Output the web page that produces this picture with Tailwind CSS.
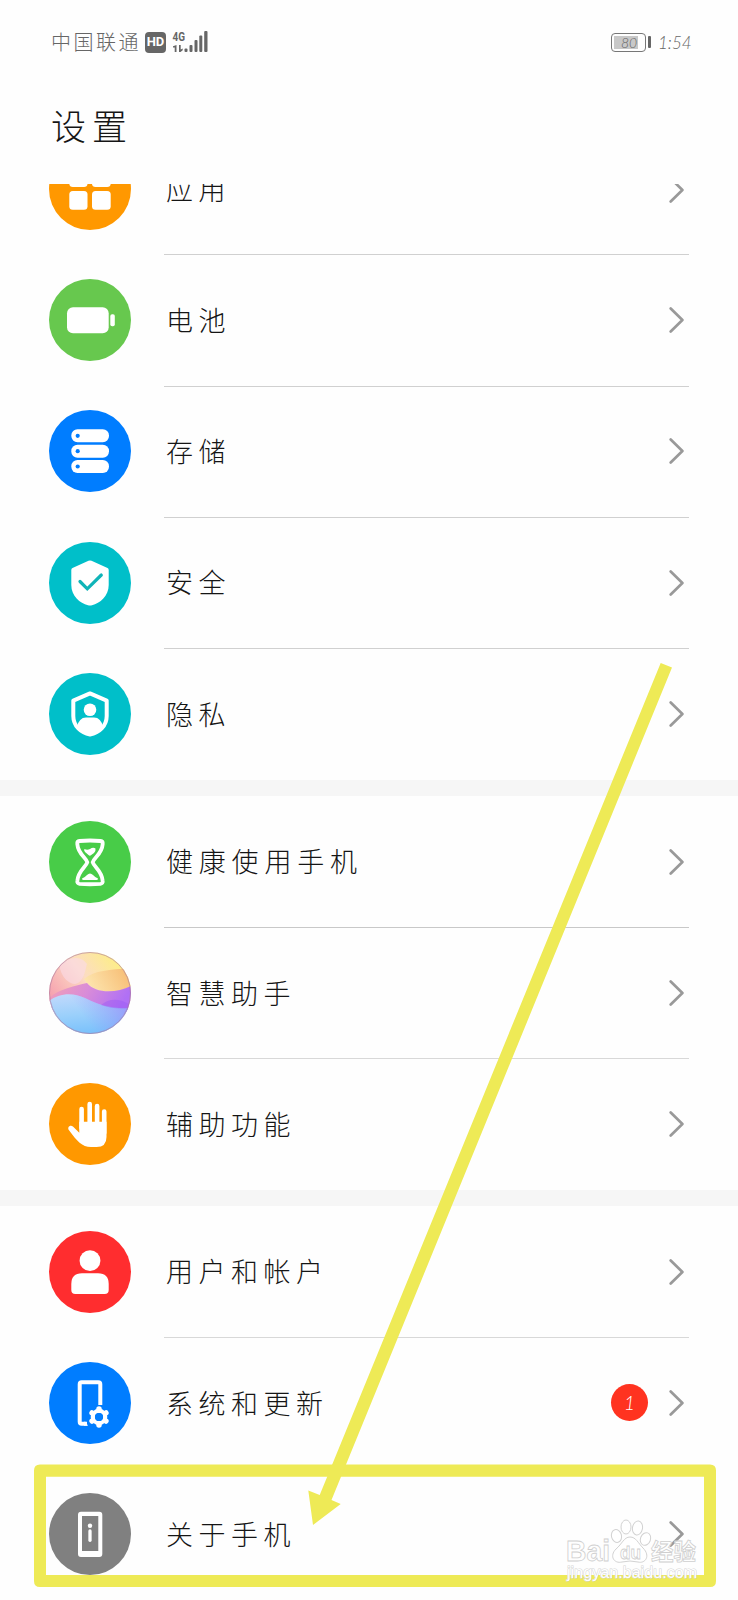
<!DOCTYPE html>
<html lang="zh-CN">
  <head>
    <meta charset="UTF-8" />
    <meta name="viewport" content="width=device-width, initial-scale=1.0" />
    <title>设置</title>
    <script src="https://cdn.jsdelivr.net/npm/@tailwindcss/browser@4"></script>
  </head>
  <body class="bg-[#fefefe] text-[#151515] font-['Noto_Sans_CJK_SC',sans-serif]">
    <div class="relative w-[738px] h-[1600px] overflow-hidden">
      <!-- Status bar -->
      <header class="h-[84px] pl-[51px] pr-[48px] flex justify-between items-center text-[#666]">
        <div class="flex items-center">
          <span class="w-[94px] text-[20px] tracking-[2.5px] font-light whitespace-nowrap leading-none">中国联通</span>
          <span class="w-[21px] h-[21px] rounded-[4px] bg-[#666] text-white text-[13px] font-bold font-['Roboto',sans-serif] flex items-center justify-center">HD</span>
          <svg class="ml-[6px]" width="37" height="24" viewBox="0 0 37 24" fill="#666">
            <text x="0.5" y="11" font-family="Roboto, sans-serif" font-weight="700" font-size="13" textLength="12.5" lengthAdjust="spacingAndGlyphs">4G</text>
            <path d="M4.500 15v7H2.700v-4.400H1v-1.400zM7 15h1.700v4.400l2-.8v1.600L8.500 22H7z" />
            <rect x="12.500" y="18.500" width="3" height="3.500" rx="1" />
            <rect x="17.500" y="15" width="3" height="7" rx="1" />
            <rect x="22.500" y="10" width="3" height="12" rx="1" />
            <rect x="27.300" y="5.500" width="3" height="16.500" rx="1" />
            <rect x="32.200" y="1" width="3.300" height="21" rx="1" />
          </svg>
        </div>
        <div class="flex items-center">
          <div class="w-[35px] h-[19px] border border-[#777] rounded-[4px] p-[2px]">
            <div class="w-[24px] h-full bg-[#c8c8c8] pl-[7px] text-[14px] leading-[13px] italic font-light font-['Lato',sans-serif]">80</div>
          </div>
          <div class="ml-[2px] w-[3px] h-[12px] bg-[#666] rounded-[1px]"></div>
          <span class="ml-[7px] w-[32px] text-[17px] leading-none italic font-light font-['Lato',sans-serif] whitespace-nowrap">1:54</span>
        </div>
      </header>

      <h1 class="h-[100px] pl-[51px] pt-[21px] text-[35px] leading-[40px] tracking-[6px] font-light">设置</h1>

      <main>
        <section class="h-[595.67px] overflow-hidden flex flex-col justify-end">
          <!-- 应用 -->
          <div class="h-[131.33px] shrink-0 pl-[49px] flex items-center">
            <svg class="shrink-0" width="82" height="82" viewBox="0 0 82 82">
              <circle cx="41" cy="41" r="41" fill="#ff9800" />
              <g fill="#fff">
                <rect x="20.300" y="20.300" width="18.200" height="18.700" rx="3.500" />
                <rect x="43" y="20.300" width="18.700" height="18.700" rx="3.500" />
                <rect x="20.300" y="43" width="18.200" height="18.700" rx="3.500" />
                <rect x="43" y="43" width="18.700" height="18.700" rx="3.500" />
              </g>
            </svg>
            <div class="ml-[33px] mr-[49px] pl-[2px] pr-[4px] pt-[3px] flex-1 h-[133px] flex items-center justify-between border-b border-[#d0d0d0]">
              <span class="text-[27px] tracking-[5.500px] font-light">应用</span>
              <svg width="16" height="28" viewBox="0 0 16 28" fill="none" stroke="#999" stroke-width="2.700" stroke-linecap="round" stroke-linejoin="round"><path d="M1.700 2.500 13.400 14 1.700 25.500" /></svg>
            </div>
          </div>
          <!-- 电池 -->
          <div class="h-[131.33px] shrink-0 pl-[49px] flex items-center">
            <svg class="shrink-0" width="82" height="82" viewBox="0 0 82 82">
              <circle cx="41" cy="41" r="41" fill="#67c84e" />
              <rect x="18" y="28.300" width="41.700" height="26" rx="6" fill="#fff" />
              <rect x="61.300" y="35.300" width="4.500" height="12" rx="1.800" fill="#fff" />
            </svg>
            <div class="ml-[33px] mr-[49px] pl-[2px] pr-[4px] pt-px flex-1 h-[133px] flex items-center justify-between border-b border-[#d0d0d0]">
              <span class="text-[27px] tracking-[5.500px] font-light">电池</span>
              <svg width="16" height="28" viewBox="0 0 16 28" fill="none" stroke="#999" stroke-width="2.700" stroke-linecap="round" stroke-linejoin="round"><path d="M1.700 2.500 13.400 14 1.700 25.500" /></svg>
            </div>
          </div>
          <!-- 存储 -->
          <div class="h-[131.33px] shrink-0 pl-[49px] flex items-center">
            <svg class="shrink-0" width="82" height="82" viewBox="0 0 82 82">
              <circle cx="41" cy="41" r="41" fill="#007dff" />
              <g fill="#fff">
                <rect x="22.300" y="19.300" width="37.700" height="13" rx="6.200" />
                <rect x="22.300" y="34.700" width="37.700" height="13" rx="6.200" />
                <rect x="22.300" y="50" width="37.700" height="13" rx="6.200" />
              </g>
              <g fill="#007dff">
                <circle cx="28.700" cy="25.800" r="2.100" />
                <circle cx="28.700" cy="41.200" r="2.100" />
                <circle cx="28.700" cy="56.500" r="2.100" />
              </g>
            </svg>
            <div class="ml-[33px] mr-[49px] pl-[2px] pr-[4px] pt-px flex-1 h-[133px] flex items-center justify-between border-b border-[#d0d0d0]">
              <span class="text-[27px] tracking-[5.500px] font-light">存储</span>
              <svg width="16" height="28" viewBox="0 0 16 28" fill="none" stroke="#999" stroke-width="2.700" stroke-linecap="round" stroke-linejoin="round"><path d="M1.700 2.500 13.400 14 1.700 25.500" /></svg>
            </div>
          </div>
          <!-- 安全 -->
          <div class="h-[131.33px] shrink-0 pl-[49px] flex items-center">
            <svg class="shrink-0" width="82" height="82" viewBox="0 0 82 82">
              <circle cx="41" cy="41" r="41" fill="#00bfc9" />
              <path d="M39.500 18.800Q41 18 42.500 18.800L58.500 26Q59.700 26.600 59.700 28V43C59.700 54 51 61.500 43 63.200Q41 63.700 39 63.200C31 61.500 22.300 54 22.300 43V28Q22.300 26.600 23.500 26Z" fill="#fff" />
              <path d="M31 39.500 38.300 46.800 52.300 33" fill="none" stroke="#10b4b8" stroke-width="3.200" stroke-linecap="round" />
            </svg>
            <div class="ml-[33px] mr-[49px] pl-[2px] pr-[4px] pt-px flex-1 h-[133px] flex items-center justify-between border-b border-[#d0d0d0]">
              <span class="text-[27px] tracking-[5.500px] font-light">安全</span>
              <svg width="16" height="28" viewBox="0 0 16 28" fill="none" stroke="#999" stroke-width="2.700" stroke-linecap="round" stroke-linejoin="round"><path d="M1.700 2.500 13.400 14 1.700 25.500" /></svg>
            </div>
          </div>
          <!-- 隐私 -->
          <div class="h-[131.33px] shrink-0 pl-[49px] flex items-center">
            <svg class="shrink-0" width="82" height="82" viewBox="0 0 82 82">
              <circle cx="41" cy="41" r="41" fill="#00bfc9" />
              <path d="M41 20.400 57.700 27.600V43C57.700 53 50 60 41 61.600 32 60 24.300 53 24.300 43V27.600Z" fill="none" stroke="#fff" stroke-width="4" stroke-linejoin="round" />
              <circle cx="41" cy="36.700" r="6.300" fill="#fff" />
              <path d="M28 54Q30 44.500 37 44.500H45Q52 44.500 54 54Q48 61 41 62Q34 61 28 54Z" fill="#fff" />
            </svg>
            <div class="ml-[33px] mr-[49px] pl-[2px] pr-[4px] flex-1 h-full flex items-center justify-between">
              <span class="text-[27px] tracking-[5.500px] font-light">隐私</span>
              <svg width="16" height="28" viewBox="0 0 16 28" fill="none" stroke="#999" stroke-width="2.700" stroke-linecap="round" stroke-linejoin="round"><path d="M1.700 2.500 13.400 14 1.700 25.500" /></svg>
            </div>
          </div>
        </section>

        <div class="h-[16.33px] bg-[#f6f6f6]"></div>

        <section>
          <!-- 健康使用手机 -->
          <div class="h-[131.33px] pl-[49px] flex items-center">
            <svg class="shrink-0" width="82" height="82" viewBox="0 0 82 82">
              <circle cx="41" cy="41" r="41" fill="#48cc48" />
              <path d="M30.500 20Q41 19 51.500 20Q54 20.400 53.700 23C53 33 45 36.500 43.700 41.300C45 46 53 50 53.700 60Q54 62.500 51.500 62.800Q41 63.700 30.500 62.800Q28 62.500 28.300 60C29 50 37 46 38.300 41.300C37 36.500 29 33 28.300 23Q28 20.400 30.500 20Z" fill="none" stroke="#fff" stroke-width="3.800" stroke-linejoin="round" />
              <path d="M35.500 28Q38 29.500 41 28Q44 26 46.500 27.500Q47 30 45 32L41.500 34.500Q40.500 35 39.500 34L36 31Q34.500 29 35.500 28Z" fill="#fff" />
              <path d="M33 57.500Q36 56 38 54Q41 51 44 54Q46 56 49 57.500Q49 59 47.500 59H34.500Q33 59 33 57.500Z" fill="#fff" />
            </svg>
            <div class="ml-[33px] mr-[49px] pl-[2px] pr-[4px] pt-px flex-1 h-[133px] flex items-center justify-between border-b border-[#c8c8c8]">
              <span class="text-[27px] tracking-[5.800px] font-light">健康使用手机</span>
              <svg width="16" height="28" viewBox="0 0 16 28" fill="none" stroke="#999" stroke-width="2.700" stroke-linecap="round" stroke-linejoin="round"><path d="M1.700 2.500 13.400 14 1.700 25.500" /></svg>
            </div>
          </div>
          <!-- 智慧助手 -->
          <div class="h-[131.33px] pl-[49px] flex items-center">
            <svg class="shrink-0" width="82" height="82" viewBox="0 0 82 82">
              <defs>
                <clipPath id="ball"><circle cx="41" cy="41" r="41" /></clipPath>
                <linearGradient id="top" x1="0.100" y1="0.600" x2="0.800" y2="0.050">
                  <stop offset="0" stop-color="#f6a4b0" />
                  <stop offset="0.500" stop-color="#fcdcc4" />
                  <stop offset="1" stop-color="#fdee86" />
                </linearGradient>
                <linearGradient id="orange" x1="0" y1="0.600" x2="1" y2="0.300">
                  <stop offset="0" stop-color="#fde6b0" />
                  <stop offset="1" stop-color="#f7bd74" />
                </linearGradient>
                <linearGradient id="purple" x1="0" y1="0" x2="1" y2="0.200">
                  <stop offset="0" stop-color="#f3a0b4" />
                  <stop offset="0.500" stop-color="#d98cd8" />
                  <stop offset="1" stop-color="#b070f5" />
                </linearGradient>
                <linearGradient id="blue" x1="0.300" y1="0" x2="0.500" y2="1">
                  <stop offset="0" stop-color="#bfd8fc" />
                  <stop offset="0.500" stop-color="#9bd0fb" />
                  <stop offset="1" stop-color="#78c0fb" />
                </linearGradient>
                <linearGradient id="violet" x1="0.400" y1="0.500" x2="1" y2="0.300">
                  <stop offset="0" stop-color="#9b8cfb" stop-opacity="0" />
                  <stop offset="1" stop-color="#9880fa" stop-opacity="0.700" />
                </linearGradient>
              </defs>
              <g clip-path="url(#ball)">
                <rect width="82" height="82" fill="url(#top)" />
                <path d="M10 12C12 26 20 32 26 32C34 31 36 20 38 12Q30 0 10 12Z" fill="#fadbe8" opacity="0.600" />
                <path d="M35 27C46 18 60 18 82 16V34C72 41 46 44 35 27Z" fill="url(#orange)" />
                <path d="M0 46C12 36 26 34 38 31C46 41 66 42 82 34V60H0Z" fill="url(#purple)" />
                <path d="M0 49C10 41 24 40 36 46C50 53 62 57 82 56V82H0Z" fill="url(#blue)" />
                <path d="M0 49C10 41 24 40 36 46C50 53 62 57 82 56V82H0Z" fill="url(#violet)" />
                <path d="M52 53Q64 43 80 52L82 56Q66 58 52 53Z" fill="#9958f4" opacity="0.400" />
              </g>
              <circle cx="41" cy="41" r="40.500" fill="none" stroke="#a8789c" stroke-opacity="0.600" stroke-width="1" />
            </svg>
            <div class="ml-[33px] mr-[49px] pl-[2px] pr-[4px] pt-px flex-1 h-[132px] flex items-center justify-between border-b border-[#d8d8d8]">
              <span class="text-[27px] tracking-[5.500px] font-light">智慧助手</span>
              <svg width="16" height="28" viewBox="0 0 16 28" fill="none" stroke="#999" stroke-width="2.700" stroke-linecap="round" stroke-linejoin="round"><path d="M1.700 2.500 13.400 14 1.700 25.500" /></svg>
            </div>
          </div>
          <!-- 辅助功能 -->
          <div class="h-[131.33px] pl-[49px] flex items-center">
            <svg class="shrink-0" width="82" height="82" viewBox="0 0 82 82">
              <circle cx="41" cy="41" r="41" fill="#ff9800" />
              <g fill="none" stroke="#fff" stroke-width="4.600" stroke-linecap="round">
                <path d="M32.600 26V45M40.700 21V45M48.100 23V45M55.200 28.500V50" />
              </g>
              <path d="M30.300 38.700H57.500V54Q57.500 64 47.500 64H42C33 64 28 58 20 47.200C17.700 44 21.500 41 24.200 43.800L30.300 49.700Z" fill="#fff" />
            </svg>
            <div class="ml-[33px] mr-[49px] pl-[2px] pr-[4px] flex-1 h-full flex items-center justify-between">
              <span class="text-[27px] tracking-[5.500px] font-light">辅助功能</span>
              <svg width="16" height="28" viewBox="0 0 16 28" fill="none" stroke="#999" stroke-width="2.700" stroke-linecap="round" stroke-linejoin="round"><path d="M1.700 2.500 13.400 14 1.700 25.500" /></svg>
            </div>
          </div>
        </section>

        <div class="h-[16px] bg-[#f6f6f6]"></div>

        <section>
          <!-- 用户和帐户 -->
          <div class="h-[131.33px] pl-[49px] flex items-center">
            <svg class="shrink-0" width="82" height="82" viewBox="0 0 82 82">
              <circle cx="41" cy="41" r="41" fill="#ff2d2f" />
              <circle cx="41" cy="29.700" r="10.400" fill="#fff" />
              <path d="M33 42.300H49Q59.700 42.300 59.700 53V59Q59.700 63 55.700 63H26.300Q22.300 63 22.300 59V53Q22.300 42.300 33 42.300Z" fill="#fff" />
            </svg>
            <div class="ml-[33px] mr-[49px] pl-[2px] pr-[4px] pt-px flex-1 h-[133px] flex items-center justify-between border-b border-[#d8d8d8]">
              <span class="text-[27px] tracking-[5.500px] font-light">用户和帐户</span>
              <svg width="16" height="28" viewBox="0 0 16 28" fill="none" stroke="#999" stroke-width="2.700" stroke-linecap="round" stroke-linejoin="round"><path d="M1.700 2.500 13.400 14 1.700 25.500" /></svg>
            </div>
          </div>
          <!-- 系统和更新 -->
          <div class="h-[131.33px] pl-[49px] flex items-center">
            <svg class="shrink-0" width="82" height="82" viewBox="0 0 82 82">
              <circle cx="41" cy="41" r="41" fill="#007dff" />
              <path d="M51.300 43V22.300Q51.300 20.300 49.300 20.300H32.700Q30.700 20.300 30.700 22.300V59.700Q30.700 61.700 32.700 61.700H38" fill="none" stroke="#fff" stroke-width="4" />
              <path d="M35 59.700H36.500L39 63.700H35Z" fill="#fff" />
              <g transform="translate(50 55)">
                <circle r="6.200" fill="none" stroke="#fff" stroke-width="4.200" />
                <path d="M0-7.500V-8M0 7.500V8M6.500-3.750 6.900-4M6.500 3.750 6.900 4M-6.500-3.750-6.900-4M-6.500 3.750-6.900 4" stroke="#fff" stroke-width="5.500" stroke-linecap="round" />
                <circle r="4" fill="#007dff" />
              </g>
            </svg>
            <div class="ml-[33px] mr-[49px] pl-[2px] pr-[4px] flex-1 h-full flex items-center">
              <span class="mr-auto text-[27px] tracking-[5.500px] font-light">系统和更新</span>
              <span class="mr-[21px] w-[37px] h-[37px] rounded-full bg-[#ff3320] text-white text-[19px] italic font-light font-['Lato',sans-serif] flex items-center justify-center">1</span>
              <svg width="16" height="28" viewBox="0 0 16 28" fill="none" stroke="#999" stroke-width="2.700" stroke-linecap="round" stroke-linejoin="round"><path d="M1.700 2.500 13.400 14 1.700 25.500" /></svg>
            </div>
          </div>
          <!-- 关于手机 -->
          <div class="h-[131.33px] pl-[49px] flex items-center">
            <svg class="shrink-0" width="82" height="82" viewBox="0 0 82 82">
              <circle cx="41" cy="41" r="41" fill="#808080" />
              <path fill-rule="evenodd" d="M32 18.700H50.300Q53.300 18.700 53.300 21.700V61Q53.300 64 50.300 64H32Q29 64 29 61V21.700Q29 18.700 32 18.700ZM33 23V58H49.300V23Z" fill="#fff" />
              <circle cx="41" cy="32.800" r="2.200" fill="#fff" />
              <path d="M41 38V47.300" stroke="#fff" stroke-width="3.300" stroke-linecap="round" />
            </svg>
            <div class="ml-[33px] mr-[49px] pl-[2px] pr-[4px] flex-1 h-full flex items-center justify-between">
              <span class="text-[27px] tracking-[5.500px] font-light">关于手机</span>
              <svg width="16" height="28" viewBox="0 0 16 28" fill="none" stroke="#999" stroke-width="2.700" stroke-linecap="round" stroke-linejoin="round"><path d="M1.700 2.500 13.400 14 1.700 25.500" /></svg>
            </div>
          </div>
        </section>
      </main>

      <!-- Highlight box, arrow and watermark -->
      <svg class="absolute inset-0 pointer-events-none" width="738" height="1600" viewBox="0 0 738 1600">
        <g fill="#eeea56">
          <path fill-rule="evenodd" d="M40 1464.500H710Q716 1464.500 716 1470.500V1581Q716 1587 710 1587H40Q34 1587 34 1581V1470.500Q34 1464.500 40 1464.500ZM46 1476.700V1575H704V1476.700Z" />
          <path d="M660.700 663 672 667.500 331.500 1500 340.700 1504 313 1525 308.300 1490.500 319.700 1495Z" />
        </g>
        <g fill="#fff" fill-opacity="0.600" stroke="#d2d2d2" stroke-width="1">
          <ellipse cx="616.500" cy="1536" rx="5" ry="6.500" transform="rotate(-15 616.500 1536)" />
          <ellipse cx="626" cy="1527" rx="5" ry="7" />
          <ellipse cx="637.500" cy="1528" rx="5" ry="7" transform="rotate(10 637.500 1528)" />
          <ellipse cx="645.500" cy="1539" rx="5" ry="6.500" transform="rotate(20 645.500 1539)" />
          <path d="M630 1537C636 1537 638 1543 643 1548C651 1556 645 1564 638 1562Q630 1560 622 1562C614 1564 609 1556 616 1549C622 1544 624 1537 630 1537Z" />
        </g>
        <g fill="#fff" fill-opacity="0.700" stroke="#cfcfcf" stroke-width="0.800" font-family="Liberation Sans, sans-serif" font-weight="700">
          <text x="566" y="1561" font-size="29" textLength="44" lengthAdjust="spacingAndGlyphs">Bai</text>
          <text x="620" y="1559" font-size="19" textLength="21" lengthAdjust="spacingAndGlyphs">du</text>
          <text x="651" y="1560" font-size="23" textLength="45" lengthAdjust="spacingAndGlyphs" font-family="Noto Sans CJK SC, sans-serif">经验</text>
        </g>
        <text x="567" y="1578" font-size="16" fill="#fff" stroke="#d4d4d4" stroke-width="1" paint-order="stroke" font-family="Liberation Sans, sans-serif" textLength="130">jingyan.baidu.com</text>
      </svg>
    </div>
  </body>
</html>
